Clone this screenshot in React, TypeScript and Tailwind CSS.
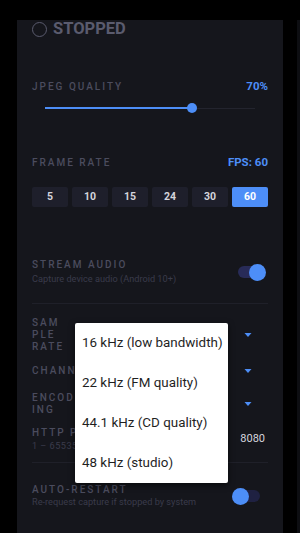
import React from "react";

const font = { fontFamily: "Roboto, 'Noto Sans', sans-serif" };

function Label({ children, className = "" }: { children: React.ReactNode; className?: string }) {
  return (
    <div className={`text-[10px] leading-[12px] font-medium tracking-[0.2em] text-[#4b4c5e] ${className}`}>{children}</div>
  );
}

function Chevron() {
  return (
    <svg width="8" height="4" viewBox="0 0 8 4" className="block">
      <path d="M0.5 0 L7.5 0 L4 4 Z" fill="#4d8ef7" />
    </svg>
  );
}

export default function App() {
  const fps = [5, 10, 15, 24, 30, 60];
  const items = ["16 kHz (low bandwidth)", "22 kHz (FM quality)", "44.1 kHz (CD quality)", "48 kHz (studio)"];
  return (
    <div className="relative w-[300px] h-[533px] overflow-hidden bg-black" style={font}>
      <div className="flex h-full pt-[20px]">
        <div className="ml-[17px] w-[266px] h-full bg-[#15161c] px-[15px] flex flex-col">
          {/* header */}
          <div className="flex items-center h-[16px] gap-[6px] mt-[1px]">
            <div className="w-[15px] h-[15px] rounded-full border-[1.5px] border-[#5a5b6e]" />
            <div className="text-[16.5px] leading-[16px] font-bold text-[#5a5b6e]">STOPPED</div>
          </div>

          {/* JPEG quality */}
          <div className="flex items-center justify-between h-[12px] mt-[44px]">
            <Label>JPEG QUALITY</Label>
            <div className="text-[11.5px] font-bold text-[#4d8ef7]">70%</div>
          </div>
          <div className="relative h-[10px] mt-[10px] mx-[13px]">
            <div className="absolute left-0 right-0 top-[4.5px] h-[1px] bg-[#23242e]" />
            <div className="absolute left-0 w-[147px] top-[4px] h-[2px] bg-[#4d8ef7]" />
            <div className="absolute left-[142px] top-0 w-[10px] h-[10px] rounded-full bg-[#4d8ef7]" />
          </div>

          {/* frame rate */}
          <div className="flex items-center justify-between h-[12px] mt-[44px]">
            <Label>FRAME RATE</Label>
            <div className="text-[11.5px] font-bold text-[#4d8ef7]">FPS: 60</div>
          </div>
          <div className="grid grid-cols-6 gap-[4px] mt-[18px]">
            {fps.map((f) => (
              <div
                key={f}
                className={`h-[20px] rounded-[2px] flex items-center justify-center text-[10.5px] font-bold ${
                  f === 60 ? "bg-[#4d8ef7] text-white" : "bg-[#1e1f2b] text-[#d4d4dc]"
                }`}
              >
                {f}
              </div>
            ))}
          </div>

          {/* stream audio */}
          <div className="flex items-center justify-between mt-[52px]">
            <div>
              <Label>STREAM AUDIO</Label>
              <div className="text-[9.2px] leading-[12px] mt-[2px] text-[#3a3b4b]">Capture device audio (Android 10+)</div>
            </div>
            <div className="relative w-[28px] h-[17px] mr-[2px]">
              <div className="absolute left-0 right-[4px] top-[2.5px] h-[12px] rounded-full bg-[#282b58]" />
              <div className="absolute right-0 top-0 w-[17px] h-[17px] rounded-full bg-[#4d8ef7]" />
            </div>
          </div>
          <div className="h-[1px] bg-[#1f2029] mt-[18px]" />

          {/* sample rate */}
          <div className="flex items-center justify-between mt-[13px]">
            <Label className="leading-[10.5px]">SAM<br />PLE<br />RATE</Label>
            <div className="mr-[16px]"><Chevron /></div>
          </div>
          <div className="flex items-center justify-between mt-[12px]">
            <Label className="leading-[10.5px] whitespace-nowrap">CHANNELS</Label>
            <div className="mr-[16px]"><Chevron /></div>
          </div>
          <div className="flex items-center justify-between mt-[15px]">
            <Label className="leading-[10.5px]">ENCOD<br />ING</Label>
            <div className="mr-[16px]"><Chevron /></div>
          </div>

          {/* http port */}
          <div className="flex items-center justify-between mt-[11px]">
            <div>
              <Label>HTTP PORT</Label>
              <div className="text-[9.2px] leading-[12px] mt-[1px] text-[#3a3b4b] tracking-[0.05em]">1 – 65535</div>
            </div>
            <div className="text-[11px] text-[#d4d4dc] mr-[3px]">8080</div>
          </div>
          <div className="h-[1px] bg-[#1f2029] mt-[10px]" />

          {/* auto restart */}
          <div className="flex items-center justify-between mt-[21px]">
            <div>
              <Label>AUTO-RESTART</Label>
              <div className="text-[9.2px] leading-[12px] text-[#3a3b4b]">Re-request capture if stopped by system</div>
            </div>
            <div className="relative w-[28px] h-[17px] mr-[8px]">
              <div className="absolute left-[4px] right-0 top-[2.5px] h-[12px] rounded-full bg-[#1f2142]" />
              <div className="absolute left-0 top-0 w-[17px] h-[17px] rounded-full bg-[#4d8ef7]" />
            </div>
          </div>
        </div>
        <div className="ml-auto w-[3px] h-full bg-[#0d0e12]" />
      </div>

      {/* dropdown popup */}
      <div className="absolute left-[75px] top-[323px] w-[153px] h-[160px] bg-white rounded-[2px] shadow-[0_2px_6px_rgba(0,0,0,0.6)] flex flex-col">
        {items.map((t) => (
          <div key={t} className="h-[40px] flex items-center pl-[7px] text-[13.4px] text-[#1f1f1f]">
            {t}
          </div>
        ))}
      </div>
    </div>
  );
}
